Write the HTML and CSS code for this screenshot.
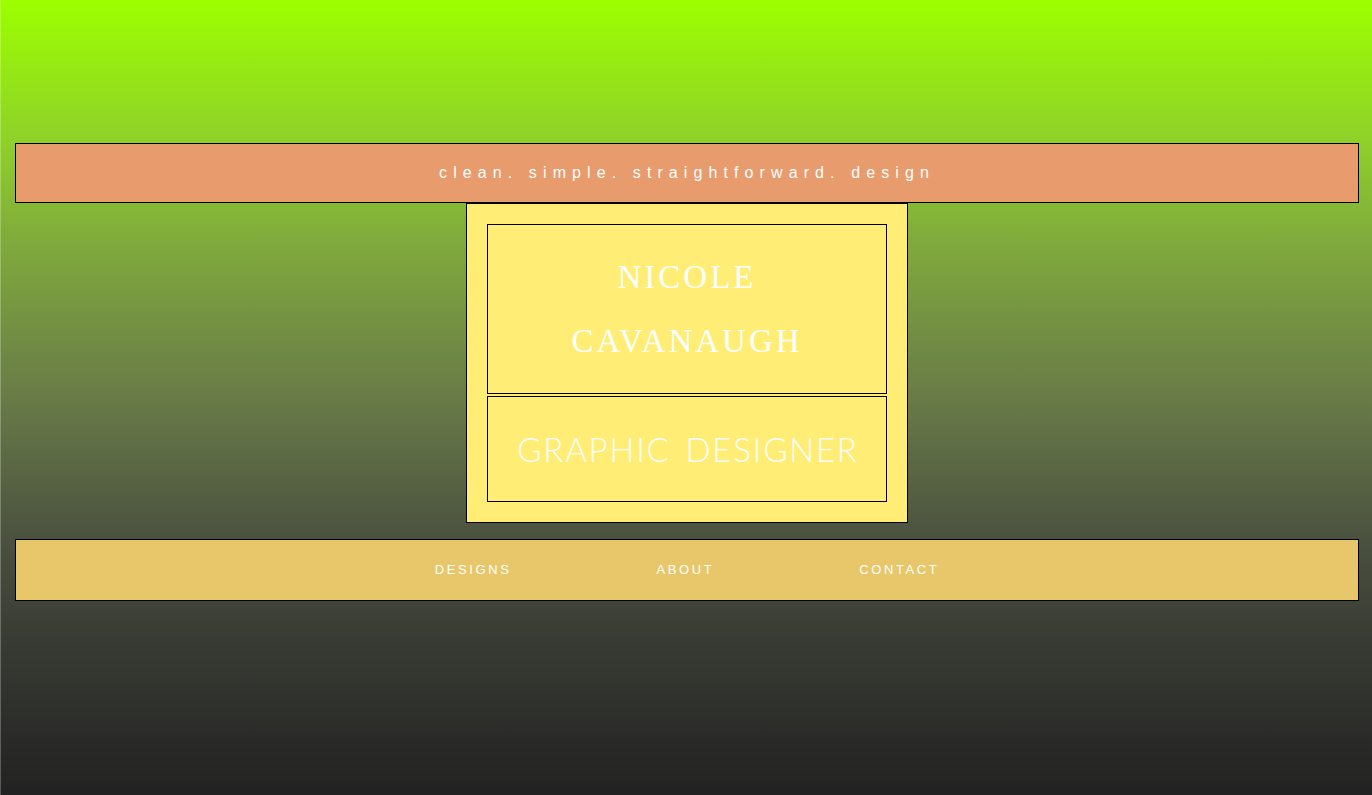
FILE: index.html
```html
<!DOCTYPE html>
<html lang="en">
<head>
<meta charset="utf-8">
<title>Nicole Cavanaugh</title>
<link rel="stylesheet" href="styles.css">
</head>
<body>
<div class="page">
  <header class="tagline">
    <p class="tagline-text">clean. simple. straightforward. design</p>
  </header>
  <section class="card">
    <div class="name-box">
      <h1 class="name">Nicole<br>Cavanaugh</h1>
    </div>
    <div class="role-box">
      <h2 class="role">Graphic Designer</h2>
    </div>
  </section>
  <nav class="nav">
    <a class="nav-link" href="#designs">Designs</a>
    <a class="nav-link" href="#about">About</a>
    <a class="nav-link" href="#contact">Contact</a>
  </nav>
</div>
</body>
</html>
```

FILE: styles.css
```css
html {
  height: 100%;
}

body {
  margin: 0;
  min-height: 100%;
  background: linear-gradient(to bottom, #9cff00 0%, #8fd02a 18%, #80ab3c 30%, #697b48 50%, #4a513f 68%, #393c34 80%, #222222 100%);
  font-family: "Liberation Sans", Arial, sans-serif;
  box-shadow: inset 1px 0 0 rgba(255, 255, 255, 0.25);
}

.page {
  padding: 143px 13px 0 15px;
  display: flex;
  flex-direction: column;
  align-items: center;
}

.tagline {
  align-self: stretch;
  height: 58px;
  background: #e89b6c;
  border: 1px solid #000;
  display: flex;
  align-items: center;
  justify-content: center;
}

.tagline-text {
  margin: 0;
  color: #fff;
  font-size: 16px;
  letter-spacing: 6.1px;
}

.card {
  width: 400px;
  padding: 20px;
  background: #ffed75;
  border: 1px solid #000;
  display: flex;
  flex-direction: column;
  gap: 2px;
}

.name-box {
  height: 168px;
  border: 1px solid #000;
  display: flex;
  align-items: center;
  justify-content: center;
}

.name {
  margin: 0;
  color: #fff;
  font-family: "Liberation Serif", "Times New Roman", serif;
  font-weight: normal;
  font-size: 33px;
  line-height: 64px;
  letter-spacing: 3px;
  text-transform: uppercase;
  text-align: center;
}

.role-box {
  height: 104px;
  border: 1px solid #000;
  display: flex;
  align-items: center;
  justify-content: center;
}

.role {
  margin: 0;
  color: #fff;
  font-family: "Lato", "Open Sans", sans-serif;
  font-weight: 300;
  font-size: 33px;
  letter-spacing: 1.8px;
  word-spacing: 4px;
  text-transform: uppercase;
  padding-left: 2px;
}

.nav {
  align-self: stretch;
  margin-top: 16px;
  height: 58px;
  padding-bottom: 2px;
  background: #e8c76a;
  border: 1px solid #000;
  display: flex;
  align-items: center;
  justify-content: center;
  gap: 145px;
}

.nav-link {
  color: #fff;
  text-decoration: none;
  text-transform: uppercase;
  font-size: 13px;
  letter-spacing: 2.6px;
}
```
